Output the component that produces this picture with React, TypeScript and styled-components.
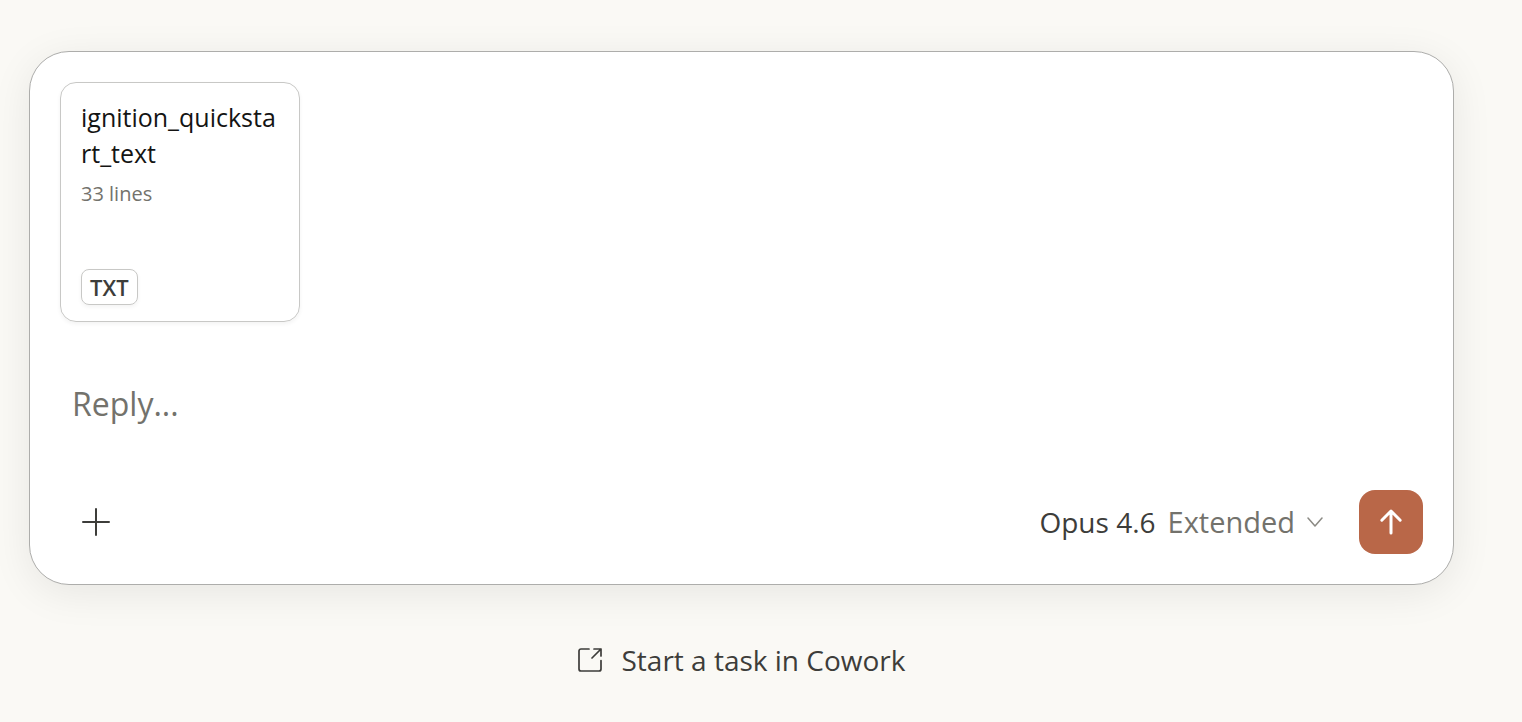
import React, { useState } from "react";
import styled, { createGlobalStyle } from "styled-components";

const GlobalStyle = createGlobalStyle`
  *, *::before, *::after { box-sizing: border-box; }
  body {
    margin: 0;
    background: #faf9f5;
    color: #3d3d3a;
    font-family: "Open Sans", "Noto Sans", sans-serif;
  }
  button, textarea { font: inherit; color: inherit; }
`;

const Page = styled.main`
  display: flex;
  flex-direction: column;
  padding: 51px 68px 32px 29px;
`;

const Composer = styled.form`
  display: flex;
  flex-direction: column;
  padding: 30px;
  background: #fff;
  border: 1px solid #adadab;
  border-radius: 40px;
  box-shadow: 0 8px 40px rgba(0, 0, 0, 0.08);
`;

const Attachments = styled.div`
  display: flex;
  gap: 24px;
`;

const FileCard = styled.article`
  display: flex;
  flex-direction: column;
  align-items: flex-start;
  width: 240px;
  height: 240px;
  padding: 16px 20px;
  border: 1px solid #c8c8c6;
  border-radius: 16px;
  box-shadow: 0 2px 4px rgba(0, 0, 0, 0.05);
`;

const FileName = styled.h3`
  margin: 0;
  color: #141413;
  font-size: 25px;
  font-weight: 400;
  line-height: 36px;
  word-break: break-all;
`;

const FileMeta = styled.p`
  margin: 8px 0 0;
  color: #73726c;
  font-size: 20px;
  line-height: 30px;
`;

const FileType = styled.span`
  margin-top: auto;
  padding: 0 8px;
  border: 1px solid #c8c8c6;
  border-radius: 8px;
  box-shadow: 0 2px 4px rgba(0, 0, 0, 0.05);
  font-size: 22px;
  font-weight: 600;
  line-height: 34px;
`;

const MessageInput = styled.textarea`
  display: block;
  width: 100%;
  height: 48px;
  margin: 58px 0 62px;
  padding: 0 12px;
  border: 0;
  outline: 0;
  resize: none;
  overflow: hidden;
  background: transparent;
  font-size: 32px;
  line-height: 48px;

  &::placeholder { color: #73726c; opacity: 1; }
`;

const Toolbar = styled.div`
  display: flex;
  align-items: center;
  justify-content: space-between;
  padding-left: 4px;
`;

const ToolbarEnd = styled.div`
  display: flex;
  align-items: center;
  gap: 16px;
`;

const SquareButton = styled.button<{ $filled?: boolean }>`
  display: grid;
  place-items: center;
  width: 64px;
  height: 64px;
  padding: 0;
  border: 0;
  border-radius: 16px;
  background: ${(p) => (p.$filled ? "#b96748" : "transparent")};
  color: ${(p) => (p.$filled ? "#fff" : "#3d3d3a")};
  cursor: pointer;
`;

const ModelButton = styled.button`
  display: flex;
  align-items: center;
  gap: 12px;
  height: 64px;
  padding: 0 20px;
  border: 0;
  border-radius: 12px;
  background: transparent;
  font-size: 28px;
  line-height: 38px;
  cursor: pointer;
`;

const ModelMode = styled.span`
  color: #73726c;
  font-size: 29px;
`;

const CoworkLink = styled.a`
  display: flex;
  align-items: center;
  align-self: center;
  gap: 20px;
  margin-top: 55px;
  color: #3d3d3a;
  font-size: 28px;
  line-height: 40px;
  text-decoration: none;
`;

const PlusIcon = () => (
  <svg width="28" height="28" viewBox="0 0 28 28" fill="none" stroke="currentColor" strokeWidth="2" strokeLinecap="round" aria-hidden="true">
    <path d="M14 1v26M1 14h26" />
  </svg>
);

const ChevronIcon = () => (
  <svg width="16" height="10" viewBox="0 0 16 10" fill="none" stroke="#8b8a84" strokeWidth="1.5" strokeLinecap="round" strokeLinejoin="round" aria-hidden="true">
    <path d="M1 1l7 8 7-8" />
  </svg>
);

const ArrowUpIcon = () => (
  <svg width="24" height="28" viewBox="0 0 24 28" fill="none" stroke="currentColor" strokeWidth="3" strokeLinecap="round" strokeLinejoin="round" aria-hidden="true">
    <path d="M12 25V3M2.8 12.2L12 3l9.2 9.2" />
  </svg>
);

const OpenIcon = () => (
  <svg width="24" height="24" viewBox="0 0 24 24" fill="none" stroke="currentColor" strokeWidth="1.7" strokeLinecap="round" strokeLinejoin="round" aria-hidden="true">
    <path d="M11 1H3a2 2 0 0 0-2 2v18a2 2 0 0 0 2 2h18a2 2 0 0 0 2-2v-8.500" />
    <path d="M16 1h7v7M23 1l-9 9" />
  </svg>
);

export default function App() {
  const [message, setMessage] = useState("");
  return (
    <>
      <GlobalStyle />
      <Page>
        <Composer onSubmit={(e) => e.preventDefault()}>
          <Attachments>
            <FileCard>
              <FileName>ignition_quickstart_text</FileName>
              <FileMeta>33 lines</FileMeta>
              <FileType>TXT</FileType>
            </FileCard>
          </Attachments>
          <MessageInput
            aria-label="Message"
            placeholder="Reply..."
            rows={1}
            value={message}
            onChange={(e) => setMessage(e.target.value)}
          />
          <Toolbar>
            <SquareButton type="button" aria-label="Add content">
              <PlusIcon />
            </SquareButton>
            <ToolbarEnd>
              <ModelButton type="button" aria-haspopup="menu">
                <span>Opus 4.6</span>
                <ModelMode>Extended</ModelMode>
                <ChevronIcon />
              </ModelButton>
              <SquareButton type="submit" $filled aria-label="Send message">
                <ArrowUpIcon />
              </SquareButton>
            </ToolbarEnd>
          </Toolbar>
        </Composer>
        <CoworkLink href="#cowork">
          <OpenIcon />
          Start a task in Cowork
        </CoworkLink>
      </Page>
    </>
  );
}
